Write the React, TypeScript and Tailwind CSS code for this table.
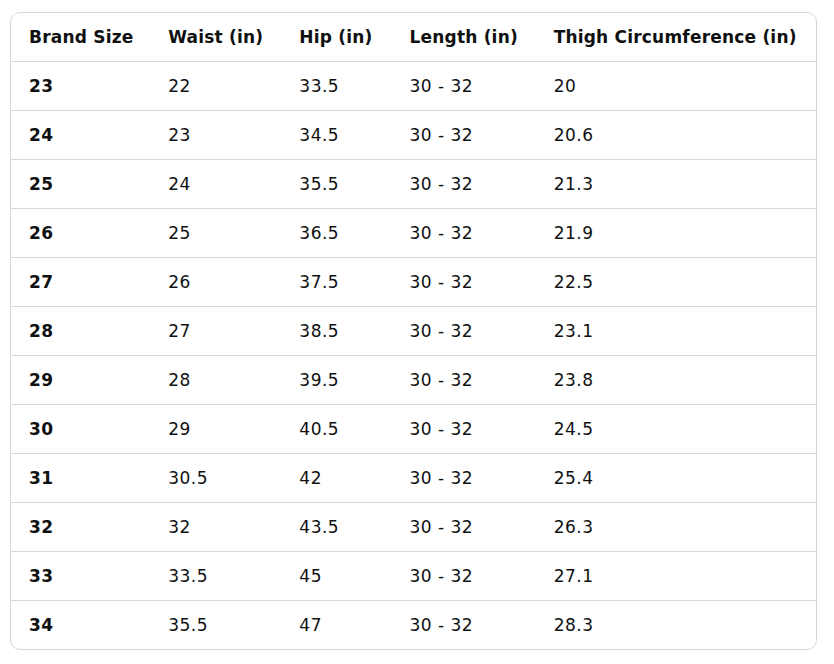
import React from "react"

const headers = ["Brand Size", "Waist (in)", "Hip (in)", "Length (in)", "Thigh Circumference (in)"]

const rows = [
  ["23", "22", "33.5", "30 - 32", "20"],
  ["24", "23", "34.5", "30 - 32", "20.6"],
  ["25", "24", "35.5", "30 - 32", "21.3"],
  ["26", "25", "36.5", "30 - 32", "21.9"],
  ["27", "26", "37.5", "30 - 32", "22.5"],
  ["28", "27", "38.5", "30 - 32", "23.1"],
  ["29", "28", "39.5", "30 - 32", "23.8"],
  ["30", "29", "40.5", "30 - 32", "24.5"],
  ["31", "30.5", "42", "30 - 32", "25.4"],
  ["32", "32", "43.5", "30 - 32", "26.3"],
  ["33", "33.5", "45", "30 - 32", "27.1"],
  ["34", "35.5", "47", "30 - 32", "28.3"],
]

const widths = ["w-[139px]", "w-[131px]", "w-[110px]", "w-[144px]", "w-[280px]"]

export default function App() {
  return (
    <div className="bg-white min-h-[664px] pt-[12px] pl-[10px] font-['DejaVu_Sans',sans-serif] text-[#0f1111]">
      <div className="w-[807px] border border-[#d5d9d9] rounded-[10px] overflow-hidden">
        <table className="w-full border-collapse table-fixed">
          <thead>
            <tr className="h-[48px]">
              {headers.map((h, i) => (
                <th key={h} className={`${widths[i]} text-left font-bold text-[17px] tracking-[0.2px] pl-[18px] pr-0 pt-[2px] whitespace-nowrap`}>
                  {h}
                </th>
              ))}
            </tr>
          </thead>
          <tbody>
            {rows.map((r) => (
              <tr key={r[0]} className="h-[49px] border-t border-[#d5d9d9]">
                {r.map((c, i) => (
                  <td key={i} className={`text-[17px] tracking-[0.5px] pl-[18px] pt-[2px] ${i === 0 ? "font-bold" : "font-normal"}`}>
                    {c}
                  </td>
                ))}
              </tr>
            ))}
          </tbody>
        </table>
      </div>
    </div>
  )
}
